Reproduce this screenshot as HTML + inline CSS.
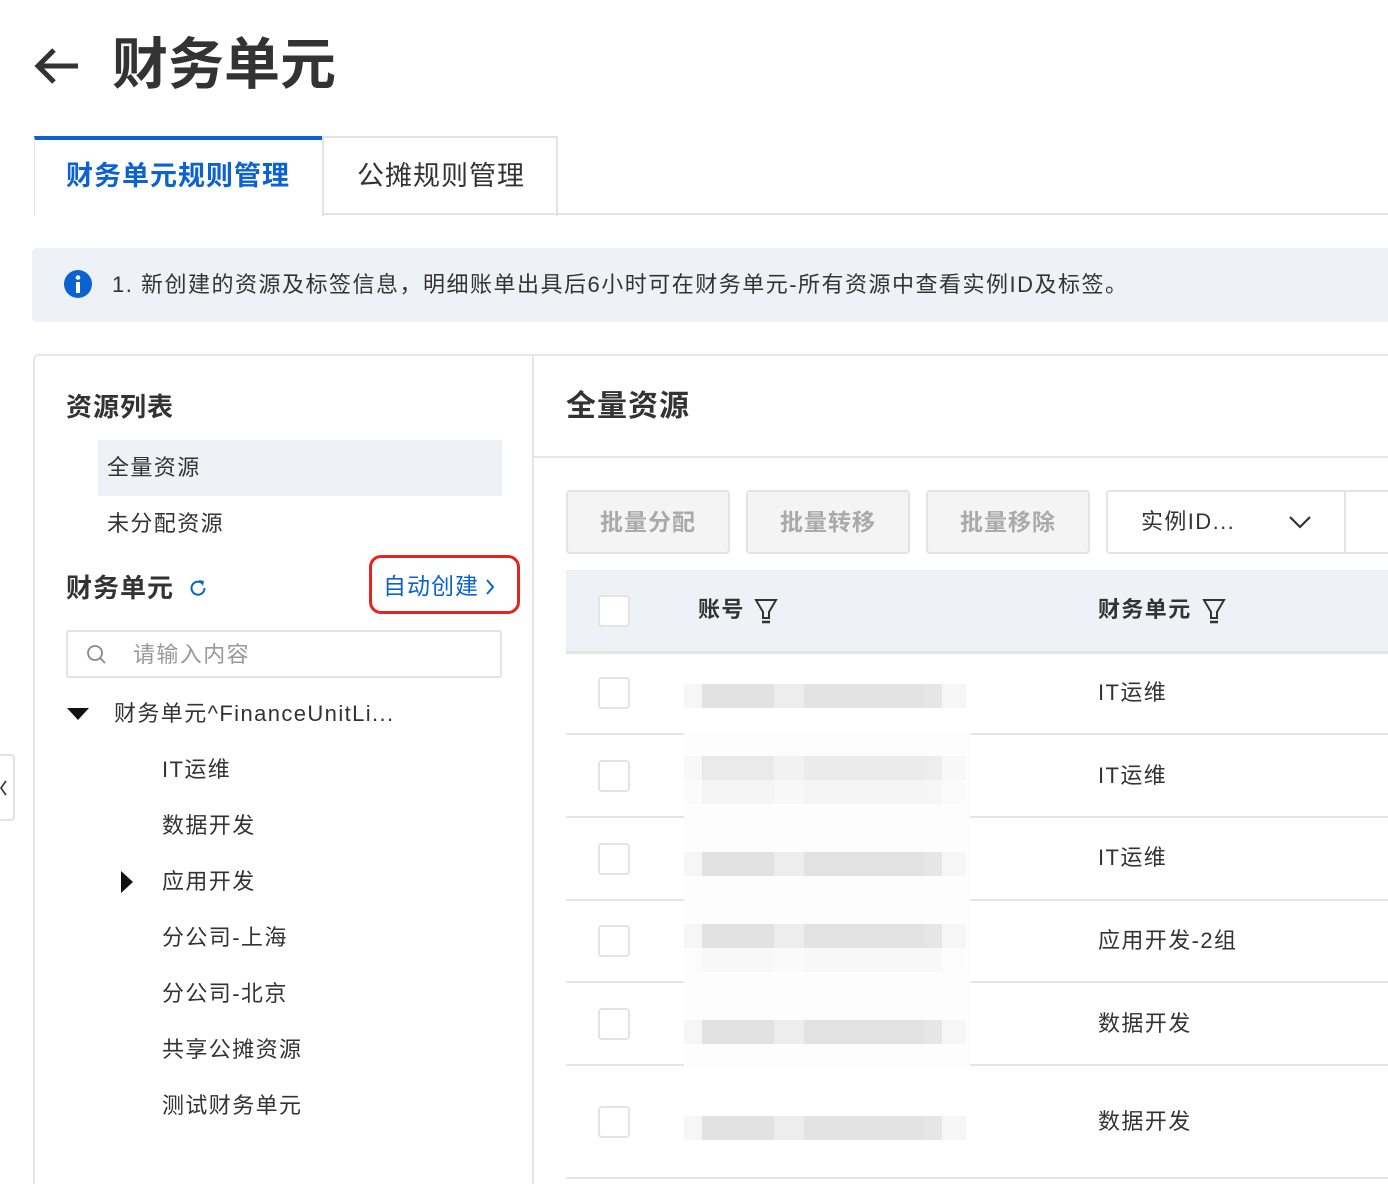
<!DOCTYPE html>
<html><head><meta charset="utf-8"><style>
*{margin:0;padding:0;box-sizing:border-box}
html,body{width:1388px;height:1184px;overflow:hidden}
body{background:#fff;font-family:"Liberation Sans","Noto Sans CJK SC",sans-serif;color:#333;position:relative}
.a{position:absolute;white-space:nowrap}
.t22{font-size:22px;line-height:30px;letter-spacing:1.4px}
.blk{position:absolute;height:24px;background:linear-gradient(90deg,#f6f6f6 0 18px,#e2e2e2 18px 90px,#ededed 90px 120px,#e3e3e3 120px 240px,#e6e6e6 240px 258px,#f6f6f6 258px)}
.cb{position:absolute;left:598px;width:32px;height:32px;border:2px solid #e3e3e3;border-radius:4px;background:#fff}
.hl{position:absolute;left:566px;width:822px;height:2px;background:#e5e5e5}
.btn{position:absolute;top:490px;height:64px;width:164px;border:2px solid #e3e3e3;border-radius:4px;background:#f4f4f4;color:#aaa;font-size:23px;font-weight:bold;text-align:center;line-height:60px;letter-spacing:1px}
</style></head><body>
<svg class="a" style="left:32px;top:46px" width="50" height="40" viewBox="0 0 50 40"><path d="M46 20H6M22 4L6 20l16 16" fill="none" stroke="#333" stroke-width="5"/></svg>
<div class="a" style="left:112px;top:30px;font-size:56px;line-height:70px;font-weight:bold;color:#333">财务单元</div>

<div class="a" style="left:34px;top:136px;width:288px;height:80px;border-top:4px solid #0b62d0;border-left:1px solid #e6e6e6;background:#fff"></div>
<div class="a" style="left:66px;top:158px;font-size:27px;line-height:36px;font-weight:bold;color:#0b62d0;letter-spacing:1px">财务单元规则管理</div>
<div class="a" style="left:322px;top:136px;width:236px;height:80px;border:2px solid #e3e3e3;border-bottom:none"></div>
<div class="a" style="left:357px;top:158px;font-size:27px;line-height:36px;color:#333;letter-spacing:1px">公摊规则管理</div>
<div class="a" style="left:322px;top:213px;width:1066px;height:2px;background:#e3e3e3"></div>

<div class="a" style="left:32px;top:248px;width:1356px;height:74px;background:#eef1f6;border-radius:4px 0 0 4px"></div>
<svg class="a" style="left:64px;top:270px" width="28" height="28" viewBox="0 0 28 28"><circle cx="14" cy="14" r="14" fill="#0b62d0"/><rect x="12" y="12" width="4" height="11" fill="#fff"/><circle cx="14" cy="7.5" r="2.3" fill="#fff"/></svg>
<div class="a" style="left:112px;top:270px;font-size:22px;line-height:30px;color:#333;letter-spacing:1.5px">1. 新创建的资源及标签信息，明细账单出具后6小时可在财务单元-所有资源中查看实例ID及标签。</div>

<div class="a" style="left:33px;top:354px;width:1400px;height:860px;border:2px solid #e6e6e6;border-radius:6px"></div>
<div class="a" style="left:532px;top:356px;width:2px;height:830px;background:#e6e6e6"></div>
<div class="a" style="left:534px;top:456px;width:854px;height:2px;background:#e6e6e6"></div>

<div class="a" style="left:66px;top:390px;font-size:26px;line-height:34px;font-weight:bold;letter-spacing:1px">资源列表</div>
<div class="a" style="left:98px;top:440px;width:404px;height:56px;background:#eef1f6"></div>
<div class="a t22" style="left:107px;top:453px">全量资源</div>
<div class="a t22" style="left:107px;top:509px">未分配资源</div>

<div class="a" style="left:66px;top:571px;font-size:26px;line-height:34px;font-weight:bold;letter-spacing:1px">财务单元</div>
<svg class="a" style="left:188px;top:578px" width="20" height="20" viewBox="0 0 20 20"><path d="M14.5 5.5A6.5 6.5 0 1 0 16.5 10" fill="none" stroke="#0b62d0" stroke-width="2"/><path d="M11 2l5 1-1 5z" fill="#0b62d0"/></svg>
<div class="a" style="left:369px;top:555px;width:151px;height:59px;border:3px solid #e8231e;border-radius:12px"></div>
<div class="a" style="left:383px;top:570px;font-size:23px;line-height:32px;color:#0b62d0;letter-spacing:1px">自动创建</div>
<svg class="a" style="left:484px;top:578px" width="12" height="18" viewBox="0 0 12 18"><path d="M3 2l6 7-6 7" fill="none" stroke="#0b62d0" stroke-width="2"/></svg>

<div class="a" style="left:66px;top:630px;width:436px;height:48px;border:2px solid #e3e3e3;border-radius:3px"></div>
<svg class="a" style="left:86px;top:644px" width="22" height="22" viewBox="0 0 22 22"><circle cx="9" cy="9" r="7" fill="none" stroke="#888" stroke-width="1.8"/><path d="M14 14l5 5" stroke="#888" stroke-width="1.8"/></svg>
<div class="a t22" style="left:133px;top:640px;color:#999">请输入内容</div>

<svg class="a" style="left:66px;top:707px" width="24" height="14"><path d="M1 1h22L12 13z" fill="#111"/></svg>
<div class="a t22" style="left:114px;top:699px">财务单元^FinanceUnitLi...</div>
<div class="a t22" style="left:162px;top:755px">IT运维</div>
<div class="a t22" style="left:162px;top:811px">数据开发</div>
<svg class="a" style="left:120px;top:871px" width="14" height="22"><path d="M1 0v22l12-11z" fill="#111"/></svg>
<div class="a t22" style="left:162px;top:867px">应用开发</div>
<div class="a t22" style="left:162px;top:923px">分公司-上海</div>
<div class="a t22" style="left:162px;top:979px">分公司-北京</div>
<div class="a t22" style="left:162px;top:1035px">共享公摊资源</div>
<div class="a t22" style="left:162px;top:1091px">测试财务单元</div>

<div class="a" style="left:-10px;top:754px;width:25px;height:67px;border:2px solid #e3e3e3;border-radius:4px;background:#fff"></div>
<svg class="a" style="left:0;top:780px" width="8" height="16"><path d="M6 1L1 8l5 7" fill="none" stroke="#333" stroke-width="1.6"/></svg>

<div class="a" style="left:566px;top:388px;font-size:30px;line-height:38px;font-weight:bold;letter-spacing:1px">全量资源</div>

<div class="btn" style="left:566px">批量分配</div>
<div class="btn" style="left:746px">批量转移</div>
<div class="btn" style="left:926px">批量移除</div>
<div class="a" style="left:1106px;top:490px;width:300px;height:64px;border:2px solid #e3e3e3;border-radius:4px;background:#fff"></div>
<div class="a" style="left:1344px;top:492px;width:2px;height:60px;background:#e3e3e3"></div>
<div class="a t22" style="left:1141px;top:507px">实例ID...</div>
<svg class="a" style="left:1288px;top:514px" width="24" height="16"><path d="M2 3l10 10L22 3" fill="none" stroke="#333" stroke-width="2.2"/></svg>

<div class="a" style="left:566px;top:570px;width:822px;height:82px;background:#eef1f6"></div>
<div class="hl" style="top:651px;height:3px"></div>
<div class="cb" style="top:595px"></div>
<div class="a t22" style="left:698px;top:595px;font-weight:bold">账号</div>
<svg class="a" style="left:754px;top:598px" width="24" height="26" viewBox="0 0 24 26"><path d="M2 2h20l-7 12v6H9v-6z" fill="none" stroke="#333" stroke-width="2"/><path d="M8 24h8" stroke="#333" stroke-width="2.5"/></svg>
<div class="a t22" style="left:1098px;top:595px;font-weight:bold">财务单元</div>
<svg class="a" style="left:1202px;top:598px" width="24" height="26" viewBox="0 0 24 26"><path d="M2 2h20l-7 12v6H9v-6z" fill="none" stroke="#333" stroke-width="2"/><path d="M8 24h8" stroke="#333" stroke-width="2.5"/></svg>

<div class="hl" style="top:733px"></div>
<div class="hl" style="top:816px"></div>
<div class="hl" style="top:899px"></div>
<div class="hl" style="top:981px"></div>
<div class="hl" style="top:1064px"></div>
<div class="hl" style="top:1177px"></div>
<div class="a" style="left:684px;top:730px;width:286px;height:337px;background:#fdfdfd"></div>

<div class="cb" style="top:677px"></div><div class="blk" style="left:684px;top:684px;width:282px"></div><div class="a t22" style="left:1098px;top:678px">IT运维</div>
<div class="cb" style="top:760px"></div><div class="blk" style="left:684px;top:756px;width:282px;opacity:.7"></div><div class="blk" style="left:684px;top:780px;width:282px;opacity:.3"></div><div class="a t22" style="left:1098px;top:761px">IT运维</div>
<div class="cb" style="top:843px"></div><div class="blk" style="left:684px;top:852px;width:282px"></div><div class="a t22" style="left:1098px;top:843px">IT运维</div>
<div class="cb" style="top:925px"></div><div class="blk" style="left:684px;top:924px;width:282px"></div><div class="blk" style="left:684px;top:948px;width:282px;opacity:.2"></div><div class="a t22" style="left:1098px;top:926px">应用开发-2组</div>
<div class="cb" style="top:1008px"></div><div class="blk" style="left:684px;top:1020px;width:282px"></div><div class="a t22" style="left:1098px;top:1009px">数据开发</div>
<div class="cb" style="top:1106px"></div><div class="blk" style="left:684px;top:1116px;width:282px"></div><div class="a t22" style="left:1098px;top:1107px">数据开发</div>
</body></html>
